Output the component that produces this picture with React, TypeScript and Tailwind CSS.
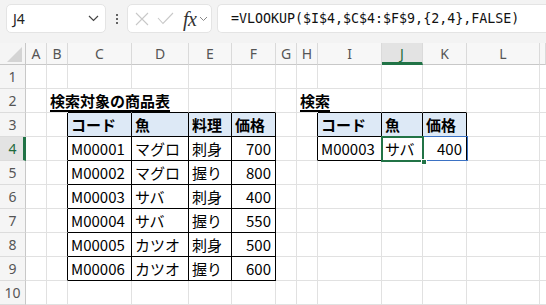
import React from "react";

type C = {
  t?: string;
  b?: boolean;
  u?: boolean;
  r?: boolean;
  hdr?: boolean;
  ov?: boolean;
};

const COLS = ["A", "B", "C", "D", "E", "F", "G", "H", "I", "J", "K", "L", ""];

const data: Record<string, C> = {
  B2: { t: "検索対象の商品表", b: true, u: true, ov: true },
  H2: { t: "検索", b: true, u: true, ov: true },
  C3: { t: "コード", b: true, hdr: true },
  D3: { t: "魚", b: true, hdr: true },
  E3: { t: "料理", b: true, hdr: true },
  F3: { t: "価格", b: true, hdr: true },
  I3: { t: "コード", b: true, hdr: true },
  J3: { t: "魚", b: true, hdr: true },
  K3: { t: "価格", b: true, hdr: true },
  I4: { t: "M00003" },
  J4: { t: "サバ" },
  K4: { t: "400", r: true },
};

const rows = [
  ["M00001", "マグロ", "刺身", "700"],
  ["M00002", "マグロ", "握り", "800"],
  ["M00003", "サバ", "刺身", "400"],
  ["M00004", "サバ", "握り", "550"],
  ["M00005", "カツオ", "刺身", "500"],
  ["M00006", "カツオ", "握り", "600"],
];
rows.forEach((rw, i) => {
  const n = i + 4;
  data["C" + n] = { t: rw[0] };
  data["D" + n] = { t: rw[1] };
  data["E" + n] = { t: rw[2] };
  data["F" + n] = { t: rw[3], r: true };
});

function inTable(col: string, row: number) {
  if (["C", "D", "E", "F"].includes(col) && row >= 3 && row <= 9) return true;
  if (["I", "J", "K"].includes(col) && row >= 3 && row <= 4) return true;
  return false;
}

function Cell({ col, row }: { col: string; row: number }) {
  const key = col + row;
  const c = data[key] || {};
  const tbl = inTable(col, row);
  const leftOfTable =
    (col === "B" && row >= 3 && row <= 9) || (col === "H" && row >= 3 && row <= 4);
  const aboveTable =
    (["C", "D", "E", "F"].includes(col) && row === 2) ||
    (["I", "J", "K"].includes(col) && row === 2);
  const hideRight = key === "B2" || key === "C2" || key === "H2";
  const rightCls =
    tbl || leftOfTable
      ? "border-r border-r-black"
      : hideRight
      ? "border-r border-r-transparent"
      : "border-r border-r-[#e1e1e1]";
  const bottomCls = tbl || aboveTable ? "border-b border-b-black" : "border-b border-b-[#e1e1e1]";
  return (
    <div
      className={`relative flex items-center ${rightCls} ${bottomCls} ${
        c.hdr ? "bg-[#dde9f6]" : "bg-white"
      } ${c.r ? "justify-end pr-[4px]" : "pl-[3px]"} ${c.ov ? "overflow-visible z-10" : "overflow-hidden"}`}
    >
      {c.t && (
        <span
          className={`whitespace-nowrap text-[15px] leading-none text-black ${
            c.b ? "font-bold" : "font-normal"
          } ${c.u ? "underline decoration-[1.5px] underline-offset-[3px]" : ""}`}
        >
          {c.t}
        </span>
      )}
    </div>
  );
}

export default function App() {
  return (
    <div
      className="w-[546px] h-[305px] overflow-hidden bg-white"
      style={{ fontFamily: '"Noto Sans CJK JP", "Noto Sans", sans-serif' }}
    >
      {/* toolbar */}
      <div className="h-[43px] bg-[#f3f3f3] flex items-start pt-[4px] pl-[6px] gap-0">
        <div className="w-[100px] h-[29px] bg-white rounded-[5px] border border-[#e4e4e4] flex items-center justify-between pl-[6px] pr-[6px] shrink-0">
          <span className="text-[14px] text-[#222]" style={{ fontFamily: '"Noto Sans", sans-serif' }}>
            J4
          </span>
          <svg width="11" height="7" viewBox="0 0 11 7">
            <path d="M1 1 L5.5 5.5 L10 1" stroke="#444" strokeWidth="1.2" fill="none" />
          </svg>
        </div>
        <div className="w-[21px] h-[29px] flex flex-col items-center justify-center gap-[2px] shrink-0">
          <span className="w-[2px] h-[2px] bg-[#333] rounded-full" />
          <span className="w-[2px] h-[2px] bg-[#333] rounded-full" />
          <span className="w-[2px] h-[2px] bg-[#333] rounded-full" />
        </div>
        <div className="w-[85px] h-[29px] bg-white rounded-[5px] border border-[#e4e4e4] flex items-center pl-[6px] shrink-0">
          <svg width="14" height="14" viewBox="0 0 14 14" className="ml-[1px]">
            <path d="M1 1 L13 13 M13 1 L1 13" stroke="#c8c8c8" strokeWidth="1.1" fill="none" />
          </svg>
          <svg width="17" height="13" viewBox="0 0 17 13" className="ml-[8px]">
            <path d="M1 6 L6 11.5 L16 1" stroke="#c8c8c8" strokeWidth="1.1" fill="none" />
          </svg>
          <span
            className="ml-[9px] italic text-[20px] leading-none text-[#333] tracking-[-0.5px]"
            style={{ fontFamily: '"Liberation Serif", serif' }}
          >
            fx
          </span>
          <svg width="9" height="6" viewBox="0 0 9 6" className="ml-[3px]">
            <path d="M1 1 L4.5 4.5 L8 1" stroke="#888" strokeWidth="1" fill="none" />
          </svg>
        </div>
        <div className="ml-[5px] h-[29px] flex-1 bg-white rounded-l-[5px] border border-r-0 border-[#e4e4e4] flex items-center pl-[13px]">
          <span
            className="text-[13.3px] text-[#111] whitespace-nowrap"
            style={{ fontFamily: '"DejaVu Sans Mono", monospace' }}
          >
            =VLOOKUP($I$4,$C$4:$F$9,{"{"}2,4{"}"},FALSE)
          </span>
        </div>
      </div>

      {/* grid */}
      <div className="relative grid grid-cols-[26px_21px_21px_64px_57px_43px_44px_21px_21px_64px_41px_44px_73px_6px] grid-rows-[22px_repeat(10,24px)]">
        {/* corner */}
        <div className="relative bg-[#f5f5f5] border-r border-b border-[#c8c8c8]">
          <svg width="26" height="22" viewBox="0 0 26 22" className="absolute inset-0">
            <path d="M7 19 L22 4 L22 19 Z" fill="#d4d4d4" />
          </svg>
        </div>
        {COLS.map((c, i) => (
          <div
            key={"h" + i}
            className={`flex items-center justify-center text-[14px] border-r border-r-[#dadada] ${
              c === "J"
                ? "bg-[#e3e3e3] border-b-[3px] border-b-[#217346] text-[#1f6b3d] pt-[2px]"
                : "bg-[#f7f7f7] border-b border-b-[#c8c8c8] text-[#555]"
            }`}
            style={{ fontFamily: '"Noto Sans", sans-serif' }}
          >
            {c}
          </div>
        ))}
        {Array.from({ length: 10 }, (_, ri) => {
          const row = ri + 1;
          return (
            <React.Fragment key={"r" + row}>
              <div
                className={`flex items-center justify-center text-[14px] border-b border-b-[#dcdcdc] ${
                  row === 4
                    ? "bg-[#e3e3e3] border-r-[3px] border-r-[#217346] text-[#1f6b3d] pl-[2px]"
                    : "bg-[#f5f5f5] border-r border-r-[#c8c8c8] text-[#555]"
                }`}
                style={{ fontFamily: '"Noto Sans", sans-serif' }}
              >
                {row}
              </div>
              {COLS.map((c) =>
                c ? (
                  <Cell key={c + row} col={c} row={row} />
                ) : (
                  <div key={"x" + row} className="border-b border-b-[#e1e1e1] bg-white" />
                )
              )}
            </React.Fragment>
          );
        })}
        {/* spill / reference blue outline J4:K4 */}
        <div className="absolute left-[381px] top-[93px] w-[87px] h-[25px] border border-[#3b72c4] pointer-events-none z-20" />
        {/* active cell */}
        <div className="absolute left-[381px] top-[93px] w-[43px] h-[26px] border-2 border-[#217346] pointer-events-none z-30" />
        <div className="absolute left-[421px] top-[116px] w-[6px] h-[6px] bg-[#217346] border border-white pointer-events-none z-40" />
      </div>
    </div>
  );
}
